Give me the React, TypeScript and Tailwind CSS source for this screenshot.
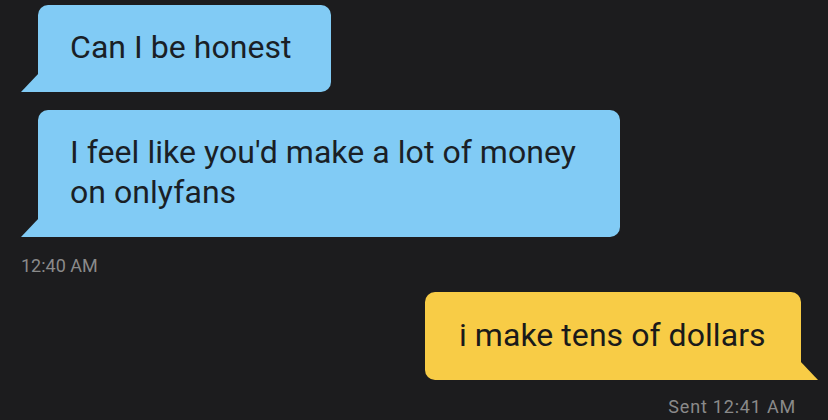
import React from "react";

const font = { fontFamily: "Roboto, 'Noto Sans', sans-serif" };

function LeftTail() {
  return (
    <svg
      className="absolute bottom-0 left-[-17px]"
      width="18"
      height="19"
      viewBox="0 0 18 19"
    >
      <polygon points="18,0 0,19 18,19" fill="#81cbf5" />
    </svg>
  );
}

function RightTail() {
  return (
    <svg
      className="absolute bottom-0 right-[-17px]"
      width="18"
      height="19"
      viewBox="0 0 18 19"
    >
      <polygon points="0,0 18,19 0,19" fill="#f8cc46" />
    </svg>
  );
}

export default function App() {
  return (
    <div
      className="w-[828px] h-[420px] bg-[#1c1c1e] overflow-hidden flex flex-col"
      style={font}
    >
      <div className="mt-[5px] ml-[38px] relative w-[293px] bg-[#81cbf5] rounded-[10px] rounded-bl-none pl-[32px] pt-[22px] pb-[25px] text-[32px] leading-[40px] font-normal tracking-[0.05px] text-[#1a1f26] whitespace-nowrap">
        Can I be honest
        <LeftTail />
      </div>
      <div className="mt-[18px] ml-[38px] relative w-[582px] bg-[#81cbf5] rounded-[10px] rounded-bl-none pl-[32px] pt-[22px] pb-[25px] text-[32px] leading-[40px] font-normal tracking-[0.05px] text-[#1a1f26] whitespace-nowrap">
        <div>I feel like you'd make a lot of money</div>
        <div>on onlyfans</div>
        <LeftTail />
      </div>
      <div className="mt-[19px] ml-[21px] text-[18px] leading-[20px] text-[#8a8a8a]">
        12:40 AM
      </div>
      <div className="mt-[16px] self-end mr-[27px] relative w-[376px] bg-[#f8cc46] rounded-[10px] rounded-br-none pl-[34px] pt-[23px] pb-[25px] text-[32px] leading-[40px] font-normal tracking-[0.05px] text-[#1a1a1a] whitespace-nowrap">
        i make tens of dollars
        <RightTail />
      </div>
      <div className="mt-[17px] self-end mr-[32px] text-[18px] leading-[20px] tracking-[0.8px] text-[#8a8a8a]">
        Sent 12:41 AM
      </div>
    </div>
  );
}
